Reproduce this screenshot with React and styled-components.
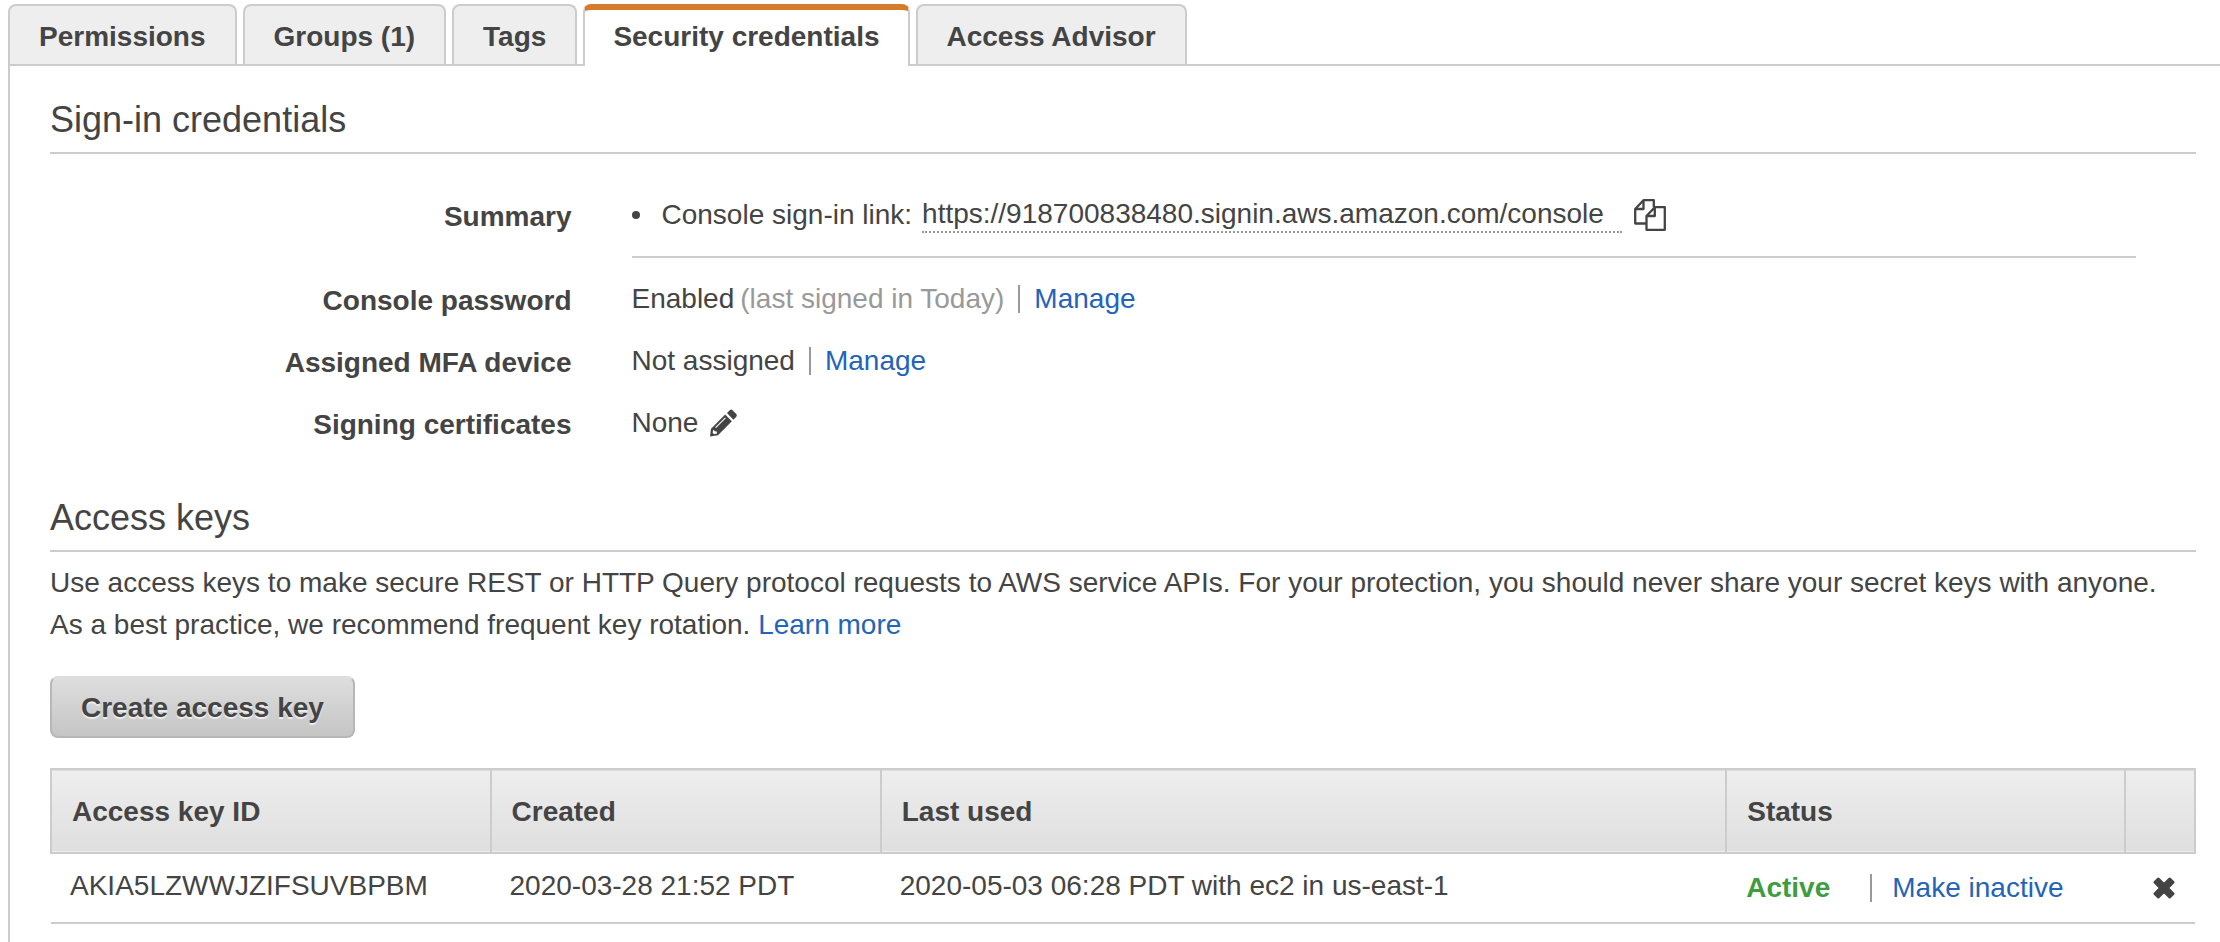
import React from 'react';
import styled, { createGlobalStyle } from 'styled-components';

const c = { text: '#444', rule: '#ccc', link: '#2364b8', muted: '#999', active: '#3f9c3f', accent: '#d57b2c' };

const GlobalStyle = createGlobalStyle`
  *, *::before, *::after { box-sizing: border-box; }
  body { margin: 0; background: #fff; color: ${c.text}; font: 28px/42px "Liberation Sans", Arial, sans-serif; }
  h2, p, ul, dl, dd { margin: 0; }
`;

const Page = styled.main`
  padding: 4px 0 0 8px;
`;

const TabBar = styled.div`
  display: flex;
  gap: 6px;
  border-bottom: 2px solid ${c.rule};
`;

const Tab = styled.button`
  height: ${p => (p.$active ? 62 : 60)}px;
  margin: 0 0 ${p => (p.$active ? -2 : 0)}px;
  padding: ${p => (p.$active ? '4px 28px 6px' : '8px 29px 4px')};
  border: 2px solid ${c.rule};
  border-bottom: 0;
  border-radius: 8px 8px 0 0;
  background: ${p => (p.$active ? '#fff' : '#eee')};
  color: inherit;
  font: inherit;
  font-weight: bold;
  white-space: nowrap;
  ${p => p.$active && `border-top: 6px solid ${c.accent};`}
`;

const Panel = styled.section`
  padding: 32px 24px 18px 40px;
  border-left: 2px solid ${c.rule};
`;

const SectionTitle = styled.h2`
  padding-bottom: 10px;
  border-bottom: 2px solid ${c.rule};
  font-size: 36px;
  line-height: 44px;
  font-weight: normal;
`;

const Details = styled.dl`
  display: grid;
  grid-template-columns: 25% minmax(0, 1fr);
  column-gap: 60px;
  row-gap: 18px;
  padding: 40px 60px 50px 0;
`;

const Label = styled.dt`
  padding-top: 2px;
  font-weight: bold;
  text-align: right;
`;

const Value = styled.dd`
  display: flex;
  align-items: center;
  height: 42px;
`;

const SummaryValue = styled.dd`
  margin-bottom: 2px;
  padding-bottom: 20px;
  border-bottom: 2px solid ${c.rule};
`;

const SummaryList = styled.ul`
  padding: 0;
  list-style: none;
`;

const SummaryItem = styled.li`
  display: flex;
  align-items: center;

  &::before {
    content: '';
    width: 8px;
    height: 8px;
    margin-right: 22px;
    border-radius: 50%;
    background: ${c.text};
  }
`;

const SignInLink = styled.a`
  margin-left: 10px;
  padding-right: 18px;
  border-bottom: 2px dotted ${c.muted};
  color: inherit;
  line-height: 34px;
  text-decoration: none;
`;

const Link = styled.a`
  color: ${c.link};
  text-decoration: none;
`;

const Muted = styled.span`
  margin-left: 6px;
  color: ${c.muted};
`;

const Divider = styled.span`
  width: 2px;
  height: 28px;
  margin: 0 ${p => (p.$wide ? 20 : 14)}px 0 14px;
  background: ${c.muted};
`;

const IconButton = styled.button`
  display: flex;
  margin: 0 0 0 ${p => (p.$inset ? 28 : 12)}px;
  padding: 0;
  border: 0;
  background: none;
  color: ${c.text};
`;

const Intro = styled.p`
  padding: 10px 0 30px;
`;

const CreateButton = styled.button`
  height: 62px;
  padding: 2px 29px 0;
  border: 2px solid #b7b7b7;
  border-top-color: #ddd;
  border-radius: 8px;
  background: linear-gradient(#dedede, #c5c5c5);
  color: inherit;
  font: inherit;
  font-weight: bold;
  text-shadow: 0 2px 1px #eee;
`;

const KeyTable = styled.table`
  width: 100%;
  margin-top: 30px;
  border-collapse: collapse;
  table-layout: fixed;
`;

const HeadRow = styled.tr`
  height: 84px;
  border: 2px solid ${c.rule};
  background: linear-gradient(#eee, #dfdfdf);
`;

const HeadCell = styled.th`
  width: ${p => p.$width};
  padding: 2px 20px 0;
  border: 2px solid ${c.rule};
  text-align: left;
`;

const BodyRow = styled.tr`
  height: 70px;
  border-bottom: 2px solid ${c.rule};
`;

const Cell = styled.td`
  padding: 0 20px 4px 19px;
`;

const StatusCell = styled.td`
  padding: 0 0 0 20px;
`;

const ActionCell = styled.td`
  padding: 0;
`;

const StatusLine = styled.div`
  display: flex;
  align-items: center;
`;

const ActiveText = styled.strong`
  margin-right: 26px;
  color: ${c.active};
`;

const CopyIcon = () => (
  <svg width="32" height="32" viewBox="0 0 32 32" fill="none" stroke="currentColor" strokeWidth="2.3" strokeLinejoin="round" aria-hidden="true">
    <path d="M12.5 24.5H1.2V10L9.5 1.2H19.8V8.2M9.5 1.2V10H1.2" />
    <path d="M20.8 8.2H30.8V30.8H12.5V17L20.8 8.2V17H12.5" />
  </svg>
);

const PencilIcon = () => (
  <svg width="28" height="28" viewBox="0 0 28 28" fill="currentColor" aria-hidden="true">
    <path d="M17 4 20 1Q21.2 0 22.5 1.2L26.3 5Q27.5 6.5 26.3 7.8L23.3 10.8Z" />
    <path d="M15.2 5.6 21.8 12.3 8 26.3 0 27.5 1 19.7Z" />
    <path d="M3.2 20.8 2.6 23.8 4 25.2 7 24.6 6.8 22.4 5 22.2Z" fill="#fff" />
    <path d="M5.6 18.6 15.4 8.8" stroke="#fff" strokeWidth="1.1" />
  </svg>
);

const CrossIcon = () => (
  <svg width="22" height="22" viewBox="0 0 22 22" fill="currentColor" stroke="currentColor" strokeWidth="3" strokeLinejoin="round" aria-hidden="true">
    <path d="M5.3 2 11 7.6 16.7 2 20 5.3 14.4 11 20 16.7 16.7 20 11 14.4 5.3 20 2 16.7 7.6 11 2 5.3Z" />
  </svg>
);

const tabs = ['Permissions', 'Groups (1)', 'Tags', 'Security credentials', 'Access Advisor'];

export default function App() {
  return (
    <Page>
      <GlobalStyle />
      <TabBar role="tablist">
        {tabs.map((name, i) => (
          <Tab key={name} type="button" role="tab" aria-selected={i === 3} $active={i === 3}>{name}</Tab>
        ))}
      </TabBar>
      <Panel>
        <SectionTitle>Sign-in credentials</SectionTitle>
        <Details>
          <Label>Summary</Label>
          <SummaryValue>
            <SummaryList>
              <SummaryItem>
                Console sign-in link:
                <SignInLink href="#console">https://918700838480.signin.aws.amazon.com/console</SignInLink>
                <IconButton type="button" aria-label="Copy sign-in link"><CopyIcon /></IconButton>
              </SummaryItem>
            </SummaryList>
          </SummaryValue>
          <Label>Console password</Label>
          <Value>Enabled<Muted>(last signed in Today)</Muted><Divider /><Link href="#password">Manage</Link></Value>
          <Label>Assigned MFA device</Label>
          <Value>Not assigned<Divider /><Link href="#mfa">Manage</Link></Value>
          <Label>Signing certificates</Label>
          <Value>None<IconButton type="button" aria-label="Edit signing certificates"><PencilIcon /></IconButton></Value>
        </Details>
        <SectionTitle>Access keys</SectionTitle>
        <Intro>
          Use access keys to make secure REST or HTTP Query protocol requests to AWS service APIs. For your protection, you should never share your secret keys with anyone.
          <br />
          As a best practice, we recommend frequent key rotation. <Link href="#learn">Learn more</Link>
        </Intro>
        <CreateButton type="button">Create access key</CreateButton>
        <KeyTable>
          <thead>
            <HeadRow>
              <HeadCell $width="20.5%">Access key ID</HeadCell>
              <HeadCell $width="18.2%">Created</HeadCell>
              <HeadCell>Last used</HeadCell>
              <HeadCell $width="18.6%">Status</HeadCell>
              <HeadCell $width="70px" aria-label="Delete" />
            </HeadRow>
          </thead>
          <tbody>
            <BodyRow>
              <Cell>AKIA5LZWWJZIFSUVBPBM</Cell>
              <Cell>2020-03-28 21:52 PDT</Cell>
              <Cell>2020-05-03 06:28 PDT with ec2 in us-east-1</Cell>
              <StatusCell>
                <StatusLine><ActiveText>Active</ActiveText><Divider $wide /><Link href="#inactive">Make inactive</Link></StatusLine>
              </StatusCell>
              <ActionCell><IconButton type="button" aria-label="Delete access key" $inset><CrossIcon /></IconButton></ActionCell>
            </BodyRow>
          </tbody>
        </KeyTable>
      </Panel>
    </Page>
  );
}
